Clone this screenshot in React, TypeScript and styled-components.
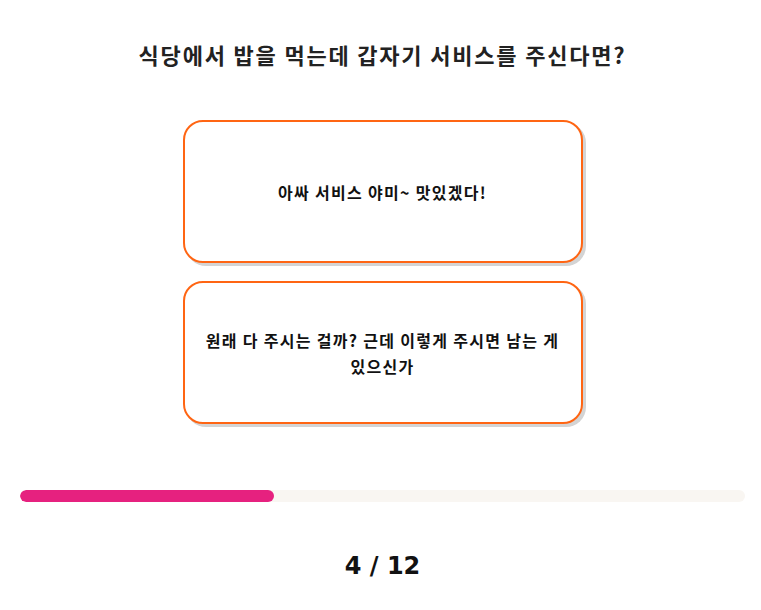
import React from "react";
import styled, { createGlobalStyle } from "styled-components";

const Global = createGlobalStyle`
  html, body { margin: 0; padding: 0; background: #fff; }
  body { font-family: "Noto Sans CJK KR", "Noto Sans", sans-serif; color: #111; }
`;

const Page = styled.div`
  padding: 34px 16px 0 20px;
  display: flex;
  flex-direction: column;
  align-items: center;
`;

const Title = styled.h1`
  margin: 0;
  font-size: 22px;
  letter-spacing: 1.8px;
  line-height: 40px;
  font-weight: 700;
  color: #222;
`;

const Choices = styled.div`
  margin-top: 46px;
  display: flex;
  flex-direction: column;
  gap: 18px;
`;

const Choice = styled.button`
  width: 400px;
  height: 143px;
  box-sizing: border-box;
  border: 2px solid #ff6513;
  border-radius: 20px;
  background: #fff;
  box-shadow: 3px 3px 0 #d4d4d4;
  padding: 0 20px;
  font-family: inherit;
  font-size: 16px;
  letter-spacing: 1.3px;
  font-weight: 700;
  line-height: 26px;
  color: #111;
  display: flex;
  align-items: center;
  justify-content: center;
  text-align: center;
  cursor: pointer;
`;

const Track = styled.div`
  margin-top: 66px;
  align-self: stretch;
  height: 12px;
  border-radius: 6px;
  background: #f9f6f2;
  overflow: hidden;
`;

const Fill = styled.div`
  height: 100%;
  border-radius: 6px;
  background: #e6217f;
`;

const Counter = styled.div`
  margin-top: 48px;
  font-size: 24px;
  font-weight: 700;
  line-height: 32px;
  color: #111;
  font-family: "DejaVu Sans", "Noto Sans CJK KR", sans-serif;
`;

export default function App() {
  const current = 4;
  const total = 12;
  return (
    <>
      <Global />
      <Page>
        <Title>식당에서 밥을 먹는데 갑자기 서비스를 주신다면?</Title>
        <Choices>
          <Choice>아싸 서비스 야미~ 맛있겠다!</Choice>
          <Choice>원래 다 주시는 걸까? 근데 이렇게 주시면 남는 게 있으신가</Choice>
        </Choices>
        <Track>
          <Fill style={{ width: `${(254 / 725) * 100}%` }} />
        </Track>
        <Counter>
          {current} / {total}
        </Counter>
      </Page>
    </>
  );
}
